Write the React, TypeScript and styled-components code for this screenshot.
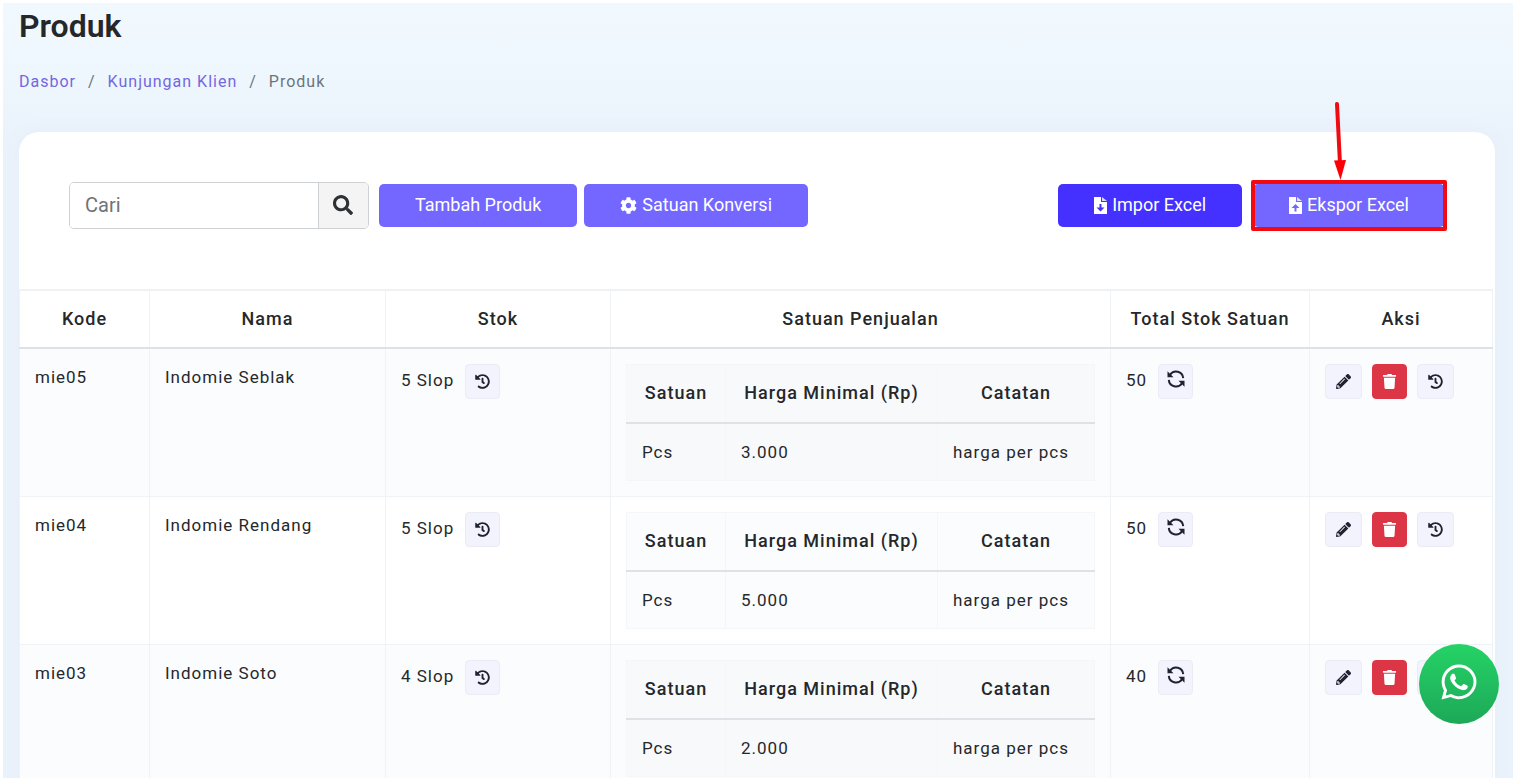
import React from "react";
import styled, { createGlobalStyle, css } from "styled-components";
import { FaCog, FaHistory, FaPencilAlt, FaSearch, FaTrash, FaWhatsapp } from "react-icons/fa";

const GlobalStyle = createGlobalStyle`
  *, *::before, *::after { box-sizing: border-box; }
  body {
    margin: 0;
    background: #fff;
    color: #25282b;
    font-family: Roboto, "Liberation Sans", sans-serif;
    font-size: 17px;
    line-height: 26px;
  }
  button, input { font: inherit; }
`;

const Page = styled.main`
  height: calc(100vh - 6px);
  margin: 3px;
  padding: 0 18px 0 16px;
  overflow: hidden;
  background: linear-gradient(180deg, #f1f9ff 0, #eff7fe 70px, #eaf2fb 130px, #eaf2fb 100%);
`;

const Title = styled.h1`
  margin: 0;
  padding-top: 4px;
  font-size: 32px;
  font-weight: 600;
  line-height: 38px;
`;

const Crumbs = styled.ol`
  display: flex;
  gap: 12px;
  margin: 0;
  padding: 24px 0 38px;
  list-style: none;
  font-size: 16px;
  line-height: 25px;
  letter-spacing: 1px;
  color: #6c757d;

  li + li::before { content: "/"; padding-right: 12px; }
  a { color: #7367e0; text-decoration: none; }
`;

const Card = styled.section`
  min-height: 100%;
  border-radius: 20px;
  background: #fff;
  box-shadow: 0 0 16px #e6eef9;
`;

const Toolbar = styled.div`
  display: flex;
  align-items: center;
  gap: 7px;
  padding: 50px 50px 60px;
`;

const Search = styled.form`
  display: flex;
  width: 300px;
  height: 47px;
  margin-right: 3px;
  border: 1px solid #cfd2d4;
  border-radius: 5px;
  overflow: hidden;

  input {
    flex: 1;
    min-width: 0;
    padding: 0 15px 2px;
    border: 0;
    outline: 0;
    font-size: 20px;
    color: #6c757d;
  }
  input::placeholder { color: #6f7477; opacity: 1; }
  button {
    display: grid;
    place-items: center;
    width: 50px;
    padding: 0 2px 2px 0;
    border: 0;
    border-left: 1px solid #cfd2d4;
    background: #f4f4f4;
    color: #2e3133;
    font-size: 20px;
  }
`;

const Button = styled.button<{ $strong?: boolean }>`
  display: inline-flex;
  align-items: center;
  justify-content: center;
  gap: 5px;
  height: 43px;
  padding: 0 36px 1px;
  border: 0;
  border-radius: 5px;
  background: ${(p) => (p.$strong ? "#4431ff" : "#7367ff")};
  color: #fff;
  font-size: 18px;
  white-space: nowrap;
`;

const Transfer = styled.div`
  display: flex;
  gap: 11px;
  margin-left: auto;
`;

const Marked = styled.div`
  position: relative;
  display: flex;

  &::after {
    content: "";
    position: absolute;
    inset: -4px -2px;
    border: 4px solid #f20a10;
    border-radius: 2px;
    pointer-events: none;
  }
`;

const Arrow = styled.svg`
  position: absolute;
  left: 76px;
  bottom: 47px;
  width: 20px;
  height: 80px;
`;

const cellBase = css`
  padding: 15px;
  border: 1px solid #f0f3f6;
  vertical-align: top;
  text-align: left;
`;

const Table = styled.table`
  width: calc(100% - 2px);
  border-collapse: collapse;
  table-layout: fixed;
  letter-spacing: 1px;
`;

const Head = styled.th`
  ${cellBase}
  padding: 15px 8px;
  border-top: 2px solid #eff1f3;
  border-bottom: 2px solid #dee2e6;
  text-align: center;
  font-size: 18px;
  font-weight: 500;
`;

const Cell = styled.td`
  ${cellBase}
`;

const Row = styled.tr<{ $shaded: boolean }>`
  background: ${(p) => (p.$shaded ? "#fafcfe" : "#fff")};
`;

const UnitTable = styled(Table)<{ $shaded: boolean }>`
  width: 100%;
  background: ${(p) => (p.$shaded ? "#f8f9fb" : "#fafcfe")};

  th, td { border-color: #f4f6f8; }
  th {
    padding-bottom: 16px;
    border-top-width: 1px;
    border-bottom-color: #dee2e6;
  }
`;

const Line = styled.div<{ $gap: number }>`
  display: flex;
  gap: ${(p) => p.$gap}px;
`;

const Amount = styled.span`
  line-height: 32px;
`;

const IconButton = styled.button<{ $danger?: boolean; $wide?: boolean; $raised?: boolean }>`
  display: grid;
  place-items: center;
  width: ${(p) => (p.$wide ? 37 : 35)}px;
  height: 35px;
  padding: 0 0 ${(p) => (p.$raised ? 5 : 1)}px;
  border: 1px solid ${(p) => (p.$danger ? "#dc3545" : "#ebebf6")};
  border-radius: 4px;
  background: ${(p) => (p.$danger ? "#dc3545" : "#f3f3fd")};
  color: ${(p) => (p.$danger ? "#fff" : "#1f2230")};
  font-size: 15px;
`;

const Chat = styled.a`
  position: fixed;
  right: 17px;
  bottom: 57px;
  display: grid;
  place-items: center;
  width: 80px;
  height: 80px;
  padding-bottom: 4px;
  border-radius: 50%;
  background: linear-gradient(180deg, #25d366, #1da858);
  color: #fff;
  font-size: 40px;
`;

const FileIcon = ({ up }: { up?: boolean }) => (
  <svg width="13" height="17" viewBox="0 0 13 17" aria-hidden="true">
    <path fill="#fff" d="M0 0h7v5h6v12H0z" />
    <path fill="#fff" opacity=".8" d="M8 0l5 4H8z" />
    <path
      fill={up ? "#7367ff" : "#4431ff"}
      d={up ? "M6.5 7l4 4H7.500v3.500h-2V11h-3z" : "M5.500 7h2v3.500h3l-4 4-4-4h3z"}
    />
  </svg>
);

const SyncIcon = () => (
  <svg width="18" height="18" viewBox="0 0 18 18" fill="none" aria-hidden="true">
    <path stroke="currentColor" strokeWidth="2" d="M3 4.800A7.200 7.200 0 0 1 16.200 8.200M15 13.200A7.200 7.200 0 0 1 1.800 9.800" />
    <path fill="currentColor" d="M.5 1.200v6H6.500zM17.500 16.800v-6H11.500z" />
  </svg>
);

const products = [
  { code: "mie05", name: "Indomie Seblak", stock: "5 Slop", price: "3.000", total: 50 },
  { code: "mie04", name: "Indomie Rendang", stock: "5 Slop", price: "5.000", total: 50 },
  { code: "mie03", name: "Indomie Soto", stock: "4 Slop", price: "2.000", total: 40 },
];

export default function App() {
  return (
    <>
      <GlobalStyle />
      <Page>
        <Title>Produk</Title>
        <nav aria-label="Breadcrumb">
          <Crumbs>
            <li><a href="#dasbor">Dasbor</a></li>
            <li><a href="#kunjungan">Kunjungan Klien</a></li>
            <li aria-current="page">Produk</li>
          </Crumbs>
        </nav>
        <Card>
          <Toolbar>
            <Search role="search" onSubmit={(e) => e.preventDefault()}>
              <input type="text" aria-label="Cari" placeholder="Cari" />
              <button type="submit" aria-label="Cari"><FaSearch /></button>
            </Search>
            <Button type="button">Tambah Produk</Button>
            <Button type="button"><FaCog size={17} />Satuan Konversi</Button>
            <Transfer>
              <Button type="button" $strong><FileIcon />Impor Excel</Button>
              <Marked>
                <Button type="button"><FileIcon up />Ekspor Excel</Button>
                <Arrow viewBox="0 0 20 80" aria-hidden="true">
                  <path d="M8 4L11 64" stroke="#ee0c12" strokeWidth="4" strokeLinecap="round" />
                  <path d="M5 60.500L17 60L11.500 80z" fill="#fb0007" />
                </Arrow>
              </Marked>
            </Transfer>
          </Toolbar>
          <Table>
            <colgroup>
              <col width="130" />
              <col width="236" />
              <col width="225" />
              <col />
              <col width="199" />
              <col width="183" />
            </colgroup>
            <thead>
              <tr>
                <Head scope="col">Kode</Head>
                <Head scope="col">Nama</Head>
                <Head scope="col">Stok</Head>
                <Head scope="col">Satuan Penjualan</Head>
                <Head scope="col">Total Stok Satuan</Head>
                <Head scope="col">Aksi</Head>
              </tr>
            </thead>
            <tbody>
              {products.map((p, i) => (
                <Row key={p.code} $shaded={i % 2 === 0}>
                  <Cell>{p.code}</Cell>
                  <Cell>{p.name}</Cell>
                  <Cell>
                    <Line $gap={11}>
                      <Amount>{p.stock}</Amount>
                      <IconButton type="button" aria-label="Riwayat stok"><FaHistory /></IconButton>
                    </Line>
                  </Cell>
                  <Cell>
                    <UnitTable $shaded={i % 2 === 0}>
                      <colgroup>
                        <col width="99" />
                        <col width="212" />
                        <col />
                      </colgroup>
                      <thead>
                        <tr>
                          <Head scope="col">Satuan</Head>
                          <Head scope="col">Harga Minimal (Rp)</Head>
                          <Head scope="col">Catatan</Head>
                        </tr>
                      </thead>
                      <tbody>
                        <tr>
                          <Cell>Pcs</Cell>
                          <Cell>{p.price}</Cell>
                          <Cell>harga per pcs</Cell>
                        </tr>
                      </tbody>
                    </UnitTable>
                  </Cell>
                  <Cell>
                    <Line $gap={11}>
                      <Amount>{p.total}</Amount>
                      <IconButton type="button" $raised aria-label="Sinkronkan stok"><SyncIcon /></IconButton>
                    </Line>
                  </Cell>
                  <Cell>
                    <Line $gap={10}>
                      <IconButton type="button" $wide aria-label="Ubah"><FaPencilAlt /></IconButton>
                      <IconButton type="button" $danger aria-label="Hapus"><FaTrash /></IconButton>
                      <IconButton type="button" $wide aria-label="Riwayat"><FaHistory /></IconButton>
                    </Line>
                  </Cell>
                </Row>
              ))}
            </tbody>
          </Table>
        </Card>
      </Page>
      <Chat href="#whatsapp" aria-label="WhatsApp"><FaWhatsapp /></Chat>
    </>
  );
}
